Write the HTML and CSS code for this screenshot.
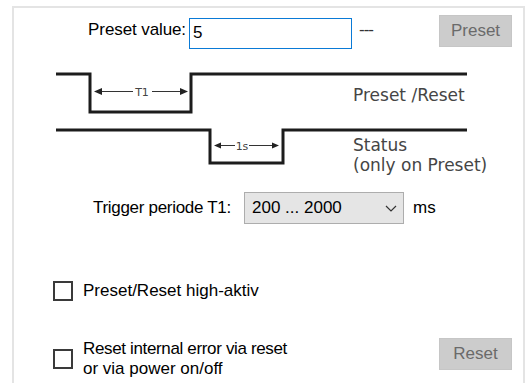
FILE: index.html
```html
<!DOCTYPE html>
<html>
<head>
<meta charset="utf-8">
<title>Preset</title>
<link rel="stylesheet" href="styles.css">
</head>
<body>
<div class="panel">
  <div class="row-preset">
    <span class="lbl-value">Preset value:</span>
    <div class="edit">5</div>
    <span class="dashes">---</span>
    <div class="btn btn-preset">Preset</div>
  </div>

  <svg class="timing" width="445" height="112" viewBox="0 0 445 112">
    <polyline points="6,8 40,8 40,46 141,46 141,8 417,8" fill="none" stroke="#1c1c1c" stroke-width="3"/>
    <line x1="50" y1="25.5" x2="83" y2="25.5" stroke="#333" stroke-width="1"/>
    <line x1="102" y1="25.5" x2="131" y2="25.5" stroke="#333" stroke-width="1"/>
    <polygon points="44,25.5 52,22 52,29" fill="#222"/>
    <polygon points="138,25.5 130,22 130,29" fill="#222"/>
    <text x="92" y="30" class="dim">T1</text>
    <text x="303" y="35" class="sig">Preset /Reset</text>

    <polyline points="6,64 160,64 160,97 233,97 233,64 417,64" fill="none" stroke="#1c1c1c" stroke-width="3"/>
    <line x1="170" y1="79.5" x2="185" y2="79.5" stroke="#333" stroke-width="1"/>
    <line x1="199" y1="79.5" x2="222" y2="79.5" stroke="#333" stroke-width="1"/>
    <polygon points="164,79.5 171,76.5 171,82.5" fill="#222"/>
    <polygon points="229,79.5 222,76.5 222,82.5" fill="#222"/>
    <text x="192" y="84" class="dim">1s</text>
    <text x="303" y="85" class="sig">Status</text>
    <text x="303" y="105" class="sig">(only on Preset)</text>
  </svg>

  <div class="row-trigger">
    <span class="lbl-trigger">Trigger periode T1:</span>
    <div class="combo">
      <span>200 ... 2000</span>
      <svg width="12" height="7" viewBox="0 0 12 7"><polyline points="1,1 6,6 11,1" fill="none" stroke="#333" stroke-width="1.2"/></svg>
    </div>
    <span class="unit">ms</span>
  </div>

  <div class="row-check first">
    <span class="check"></span>
    <span class="check-text">Preset/Reset high-aktiv</span>
  </div>

  <div class="row-check second">
    <span class="check"></span>
    <span class="check-text"><span class="tight">Reset internal error via reset</span><br>or via power on/off</span>
    <div class="btn btn-reset">Reset</div>
  </div>
</div>
</body>
</html>
```

FILE: styles.css
```css
html,body{margin:0;padding:0;background:#fff;overflow:hidden;}
body{font:17px/20px "Liberation Sans", Arial, sans-serif;color:#000;}

.panel{margin:6px 0 0 12px;width:513px;height:377px;border:2px solid #e4e4e4;border-bottom:none;box-sizing:border-box;}

.row-preset{display:flex;align-items:flex-start;padding-top:7px;}
.lbl-value{width:172px;text-align:right;margin-top:5px;letter-spacing:-0.1px;}
.edit{width:163px;height:31px;margin:3px 0 0 3px;box-sizing:border-box;border:1px solid #0a7ad6;padding:3px 0 0 3px;line-height:22px;}
.dashes{margin:5px 0 0 7px;letter-spacing:-1px;color:#333;}
.btn{width:73px;height:32px;box-sizing:border-box;background:#cccccc;border:1px solid #c6c6c6;color:#6a6a6a;text-align:center;line-height:30px;}
.btn-preset{margin-left:auto;margin-right:11px;}

.timing{display:block;margin:17px 0 0 36px;}
.timing .dim{font:11px "DejaVu Sans", sans-serif;fill:#444;text-anchor:middle;}
.timing .sig{font:17px "DejaVu Sans", Verdana, sans-serif;fill:#454545;}

.row-trigger{display:flex;align-items:center;margin-top:14px;height:32px;}
.lbl-trigger{width:151px;margin-left:79px;letter-spacing:-0.3px;}
.combo{width:160px;height:32px;box-sizing:border-box;background:#e5e5e5;border:1px solid #adadad;display:flex;align-items:center;justify-content:space-between;padding:0 6px 0 7px;}
.unit{margin-left:9px;}

.row-check{display:flex;align-items:center;}
.row-check.first{margin-top:57px;height:20px;}
.row-check.second{margin-top:38px;}
.check{width:20px;height:20px;box-sizing:border-box;border:2px solid #3a3a3a;margin-left:39px;background:#fff;}
.check-text{margin-left:10px;}
.tight{letter-spacing:-0.35px;}
.btn-reset{margin-left:auto;margin-right:11px;align-self:flex-start;margin-top:-1px;}
```
